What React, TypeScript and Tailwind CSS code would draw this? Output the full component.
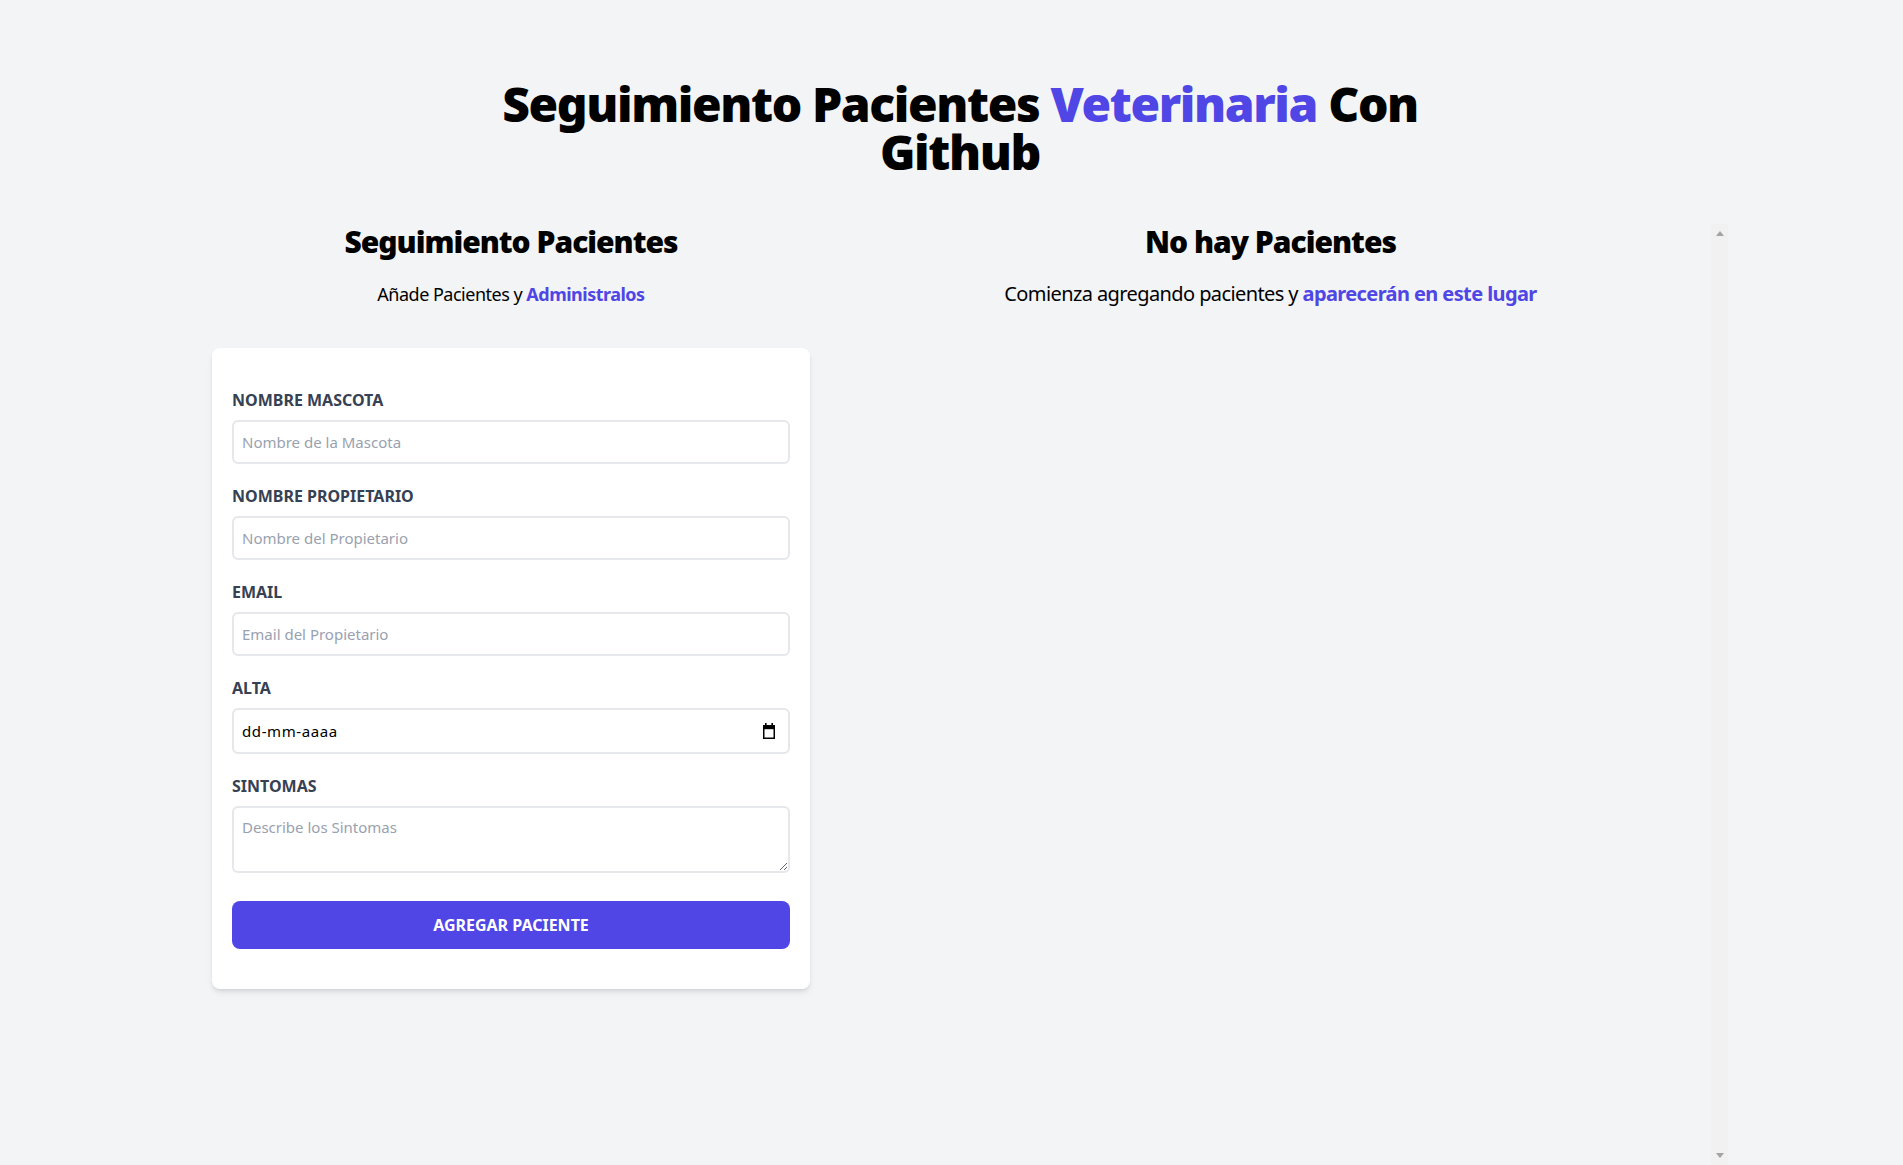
import { useState } from 'react';

function CalendarGlyph() {
  return (
    <svg width="14" height="16" viewBox="0 0 14 16" className="shrink-0">
      <rect x="3" y="0" width="1.6" height="3" fill="#000" />
      <rect x="9.4" y="0" width="1.6" height="3" fill="#000" />
      <rect x="1" y="2.2" width="12" height="4" fill="#000" />
      <rect x="1.75" y="2.95" width="10.5" height="12.3" fill="none" stroke="#000" strokeWidth="1.5" />
    </svg>
  );
}

// the empty scroll track seen beside the listado
function ScrollTrack() {
  return (
    <div className="w-[17px] shrink-0 bg-[#f1f1f1] flex flex-col justify-between items-center py-[7px]">
      <svg width="8" height="5" viewBox="0 0 8 5">
        <polygon points="4,0 8,5 0,5" fill="#a3a3a3" />
      </svg>
      <svg width="8" height="5" viewBox="0 0 8 5">
        <polygon points="0,0 8,0 4,5" fill="#a3a3a3" />
      </svg>
    </div>
  );
}

function Formulario() {
  const [mascota, setMascota] = useState('');
  const [propietario, setPropietario] = useState('');
  const [email, setEmail] = useState('');
  const [sintomas, setSintomas] = useState('');

  return (
    <div className="w-[638px] shrink-0">
      <h2 className="font-black text-3xl text-center tracking-[-1px]">Seguimiento Pacientes</h2>
      <p className="text-lg mt-5 text-center mb-10 tracking-[-0.5px]">
        Añade Pacientes y <span className="text-[#4f46e5] font-bold">Administralos</span>
      </p>

      <form className="bg-white shadow-md rounded-lg py-10 px-5 mx-5" onSubmit={e => e.preventDefault()}>
        <div className="mb-5">
          <label htmlFor="mascota" className="block text-gray-700 uppercase font-bold">Nombre Mascota</label>
          <input
            id="mascota"
            type="text"
            placeholder="Nombre de la Mascota"
            className="border-2 border-gray-200 w-full h-[44px] px-2 mt-2 placeholder-gray-400 rounded-md outline-none text-[15px]"
            value={mascota}
            onChange={e => setMascota(e.target.value)}
          />
        </div>

        <div className="mb-5">
          <label htmlFor="propietario" className="block text-gray-700 uppercase font-bold">Nombre Propietario</label>
          <input
            id="propietario"
            type="text"
            placeholder="Nombre del Propietario"
            className="border-2 border-gray-200 w-full h-[44px] px-2 mt-2 placeholder-gray-400 rounded-md outline-none text-[15px]"
            value={propietario}
            onChange={e => setPropietario(e.target.value)}
          />
        </div>

        <div className="mb-5">
          <label htmlFor="email" className="block text-gray-700 uppercase font-bold">Email</label>
          <input
            id="email"
            type="email"
            placeholder="Email del Propietario"
            className="border-2 border-gray-200 w-full h-[44px] px-2 mt-2 placeholder-gray-400 rounded-md outline-none text-[15px]"
            value={email}
            onChange={e => setEmail(e.target.value)}
          />
        </div>

        <div className="mb-5">
          <label htmlFor="alta" className="block text-gray-700 uppercase font-bold">Alta</label>
          {/* fake date field so the placeholder reads dd-mm-aaaa regardless of locale */}
          <div
            id="alta"
            className="border-2 border-gray-200 w-full h-[46px] pl-2 pr-3 mt-2 rounded-md flex items-center justify-between bg-white"
          >
            <span className="text-black text-[15px] tracking-[0.6px]">dd-mm-aaaa</span>
            <CalendarGlyph />
          </div>
        </div>

        <div className="mb-[28px]">
          <label htmlFor="sintomas" className="block text-gray-700 uppercase font-bold">Sintomas</label>
          <textarea
            id="sintomas"
            rows={2}
            placeholder="Describe los Sintomas"
            className="block border-2 border-gray-200 w-full h-[67px] p-2 mt-2 placeholder-gray-400 rounded-md outline-none text-[15px]"
            value={sintomas}
            onChange={e => setSintomas(e.target.value)}
          />
        </div>

        <input
          type="submit"
          value="Agregar Paciente"
          className="bg-[#4f46e5] w-full h-[48px] text-white uppercase font-bold rounded-lg cursor-pointer"
        />
      </form>
    </div>
  );
}

function ListadoPacientes() {
  return (
    <div className="flex-1 h-[941px] flex">
      <div className="flex-1">
        <h2 className="font-black text-3xl text-center tracking-[-1px]">No hay Pacientes</h2>
        <p className="text-xl mt-5 text-center mb-10 tracking-[-0.6px]">
          Comienza agregando pacientes y <span className="text-[#4f46e5] font-bold">aparecerán en este lugar</span>
        </p>
      </div>
      <ScrollTrack />
    </div>
  );
}

export default function App() {
  return (
    <div className="h-screen overflow-hidden bg-gray-100 text-black font-['Noto_Sans','Open_Sans',sans-serif]">
      <div className="ml-[192px] w-[1536px] mt-20">
        <h1 className="font-black text-5xl text-center w-2/3 mx-auto leading-none tracking-[-1.4px]">
          Seguimiento Pacientes <span className="text-[#4f46e5]">Veterinaria</span> Con Github
        </h1>

        <div className="mt-12 flex">
          <Formulario />
          <ListadoPacientes />
        </div>
      </div>
    </div>
  );
}
